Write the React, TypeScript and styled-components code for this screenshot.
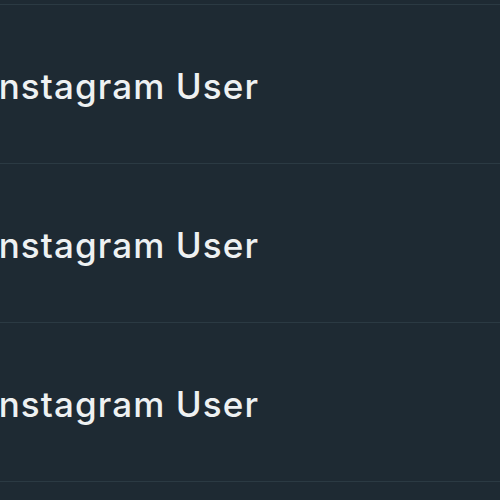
import React from 'react';
import styled, { createGlobalStyle } from 'styled-components';

const Global = createGlobalStyle`
    html, body {
        margin: 0;
        padding: 0;
        background: #1e2a33;
        overflow: hidden;
    }
    body {
        font-family: Inter, "Noto Sans", sans-serif;
    }
`;

const Liste = styled.div`
    display: flex;
    flex-direction: column;
    margin-top: -154px;
    height: 660px;
    overflow: hidden;
`;

const Rad = styled.div`
    display: flex;
    align-items: center;
    height: 158px;
    flex-shrink: 0;
    border-bottom: 1px solid #2b3a43;
`;

const Navn = styled.span`
    margin-left: -12px;
    padding-top: 4px;
    color: #eef1f2;
    font-size: 35px;
    font-weight: 500;
    letter-spacing: 1.1px;
    white-space: nowrap;
`;

const brukere = ['Instagram User', 'Instagram User', 'Instagram User', 'Instagram User'];

export default function App() {
    return (
        <>
            <Global />
            <Liste>
                {brukere.map((navn, i) => (
                    <Rad key={i}>
                        <Navn>{navn}</Navn>
                    </Rad>
                ))}
            </Liste>
        </>
    );
}
